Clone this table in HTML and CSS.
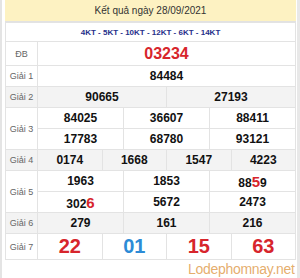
FILE: index.html
```html
<html>

<head>
    <meta charset='utf-8'>
    <title>Kết quả xổ số</title>
    <link rel="stylesheet" href="styles.css">
</head>

<body>
    <div class="frame">
        <div class="mark"></div>
        <div class="title">Kết quả ngày 28/09/2021</div>
        <table class="results">
            <colgroup>
                <col class="col-label">
                <col><col><col><col><col><col><col><col><col><col><col><col>
            </colgroup>
            <tr class="codes">
                <td colspan="13">4KT - 5KT - 10KT - 12KT - 6KT - 14KT</td>
            </tr>
            <tr class="special">
                <td class="label">ĐB</td>
                <td colspan="12" class="num big-red">03234</td>
            </tr>
            <tr>
                <td class="label">Giải 1</td>
                <td colspan="12" class="num">84484</td>
            </tr>
            <tr class="shade">
                <td class="label">Giải 2</td>
                <td colspan="6" class="num">90665</td>
                <td colspan="6" class="num">27193</td>
            </tr>
            <tr>
                <td class="label" rowspan="2">Giải 3</td>
                <td colspan="4" class="num">84025</td>
                <td colspan="4" class="num">36607</td>
                <td colspan="4" class="num">88411</td>
            </tr>
            <tr>
                <td colspan="4" class="num">17783</td>
                <td colspan="4" class="num">68780</td>
                <td colspan="4" class="num">93121</td>
            </tr>
            <tr class="shade">
                <td class="label">Giải 4</td>
                <td colspan="3" class="num">0174</td>
                <td colspan="3" class="num">1668</td>
                <td colspan="3" class="num">1547</td>
                <td colspan="3" class="num">4223</td>
            </tr>
            <tr>
                <td class="label" rowspan="2">Giải 5</td>
                <td colspan="4" class="num">1963</td>
                <td colspan="4" class="num">1853</td>
                <td colspan="4" class="num">88<span class="hit">5</span>9</td>
            </tr>
            <tr>
                <td colspan="4" class="num">302<span class="hit">6</span></td>
                <td colspan="4" class="num">5672</td>
                <td colspan="4" class="num">2473</td>
            </tr>
            <tr class="shade">
                <td class="label">Giải 6</td>
                <td colspan="4" class="num">279</td>
                <td colspan="4" class="num">161</td>
                <td colspan="4" class="num">216</td>
            </tr>
            <tr class="seventh">
                <td class="label">Giải 7</td>
                <td colspan="3" class="num red">22</td>
                <td colspan="3" class="num blue">01</td>
                <td colspan="3" class="num red">15</td>
                <td colspan="3" class="num red">63</td>
            </tr>
        </table>
        <div class="watermark">Lodephomnay.net</div>
    </div>
</body>

</html>
```

FILE: styles.css
```css
body {
    margin: 0;
    font-family: "Liberation Sans", Arial, sans-serif;
    background: #fff;
}
.frame {
    position: relative;
    width: 291px;
    height: 278px;
    border-left: 2px solid #e4e4e4;
    border-right: 3px solid #e8e8e8;
    padding: 0 1px 0 3px;
    overflow: hidden;
}
.mark {
    position: absolute;
    left: -2px;
    top: 76px;
    width: 2px;
    height: 16px;
    background: #e8884c;
}
.title {
    height: 21px;
    line-height: 21px;
    background: #fdf2c2;
    text-align: center;
    font-size: 10px;
    color: #333;
    border-bottom: 1px solid #e2e2e2;
}
.results {
    width: 291px;
    border-collapse: collapse;
    table-layout: fixed;
}
.col-label {
    width: 32px;
}
.results td {
    border: 1px solid #e3e3e3;
    text-align: center;
    padding: 0;
    height: 21px;
}
.codes td {
    height: 19px;
    font-size: 8px;
    font-weight: bold;
    color: #26308a;
}
.special td {
    height: 24px;
}
.label {
    font-size: 9px;
    color: #666;
}
.num {
    font-size: 12px;
    font-weight: bold;
    color: #111;
}
.big-red {
    font-size: 16px;
    color: #d7252c;
}
.shade td {
    background: #f3f3f3;
}
.hit {
    font-size: 15px;
    color: #d7252c;
}
.seventh td {
    height: 26px;
}
.seventh .num {
    font-size: 20px;
}
.red {
    color: #d7252c;
}
.blue {
    color: #2d8bd6;
}
.watermark {
    position: absolute;
    left: 186px;
    top: 261px;
    font-size: 14px;
    letter-spacing: -0.3px;
    color: rgba(222, 152, 70, 0.8);
    white-space: nowrap;
}
```
